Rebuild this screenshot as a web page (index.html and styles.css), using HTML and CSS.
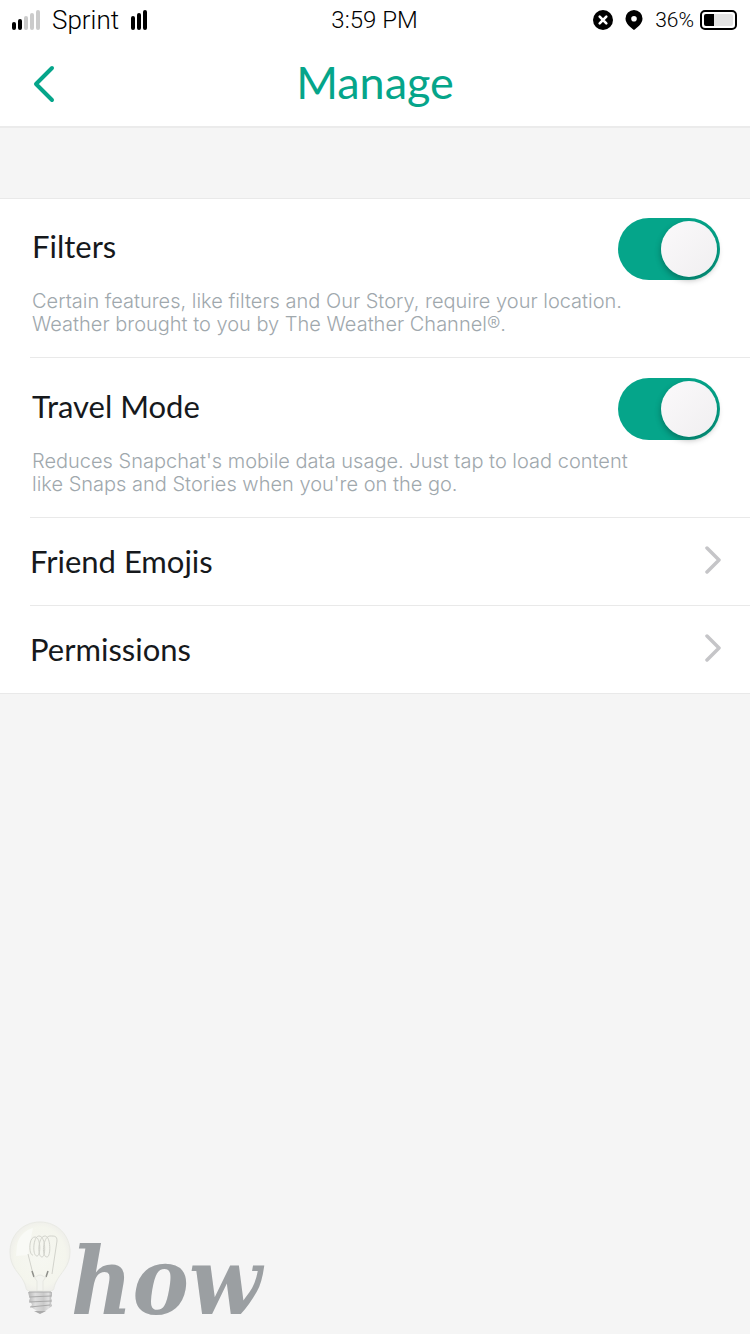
FILE: index.html
```html
<!DOCTYPE html>
<html lang="en">
<head>
<meta charset="utf-8">
<meta name="viewport" content="width=device-width, initial-scale=1">
<title>Manage</title>
<link rel="stylesheet" href="styles.css">
</head>
<body>
<div class="screen">
  <div class="status">
    <div class="status-side">
      <svg width="28" height="20" viewBox="0 0 28 20" aria-hidden="true">
        <g fill="#000"><rect x="0" y="12" width="4" height="8" rx="2"/><rect x="6" y="9" width="4" height="11" rx="2"/></g>
        <g fill="#cbcbcb"><rect x="12" y="6" width="4" height="14" rx="2"/><rect x="18" y="3" width="4" height="17" rx="2"/><rect x="24" y="0" width="4" height="20" rx="2"/></g>
      </svg>
      <span class="carrier">Sprint</span>
      <svg width="16" height="20" viewBox="0 0 16 20" aria-hidden="true">
        <rect x="0" y="6" width="4" height="14" rx="2"/><rect x="6" y="3" width="4" height="17" rx="2"/><rect x="12" y="0" width="4" height="20" rx="2"/>
      </svg>
    </div>
    <time>3:59 PM</time>
    <div class="status-side status-end">
      <svg width="20" height="20" viewBox="0 0 20 20" aria-hidden="true">
        <circle cx="10" cy="10" r="10"/><path d="M6.700 6.700l6.600 6.600M13.300 6.700l-6.600 6.600" stroke="#fff" stroke-width="2.600" stroke-linecap="round"/>
      </svg>
      <svg width="18" height="20" viewBox="0 0 18 20" aria-hidden="true">
        <path fill-rule="evenodd" d="M9 0a8.500 8.500 0 0 1 8.500 8.600c0 5.200-5 8.800-8.500 11.400C5.500 17.400.5 13.800.5 8.600A8.500 8.500 0 0 1 9 0zm0 6a2.800 2.800 0 1 0 0 5.600A2.800 2.800 0 0 0 9 6z"/>
      </svg>
      <span class="battery">
        <span>36%</span>
        <svg width="37" height="20" viewBox="0 0 37 20" aria-hidden="true">
          <rect x="1" y="1" width="35" height="18" rx="4" fill="#fff" stroke="#000" stroke-width="2"/>
          <rect x="4" y="4" width="29" height="12" rx="2" fill="#e3e3e3"/><path d="M6 4h8v12H6a2 2 0 0 1-2-2V6a2 2 0 0 1 2-2z"/>
        </svg>
      </span>
    </div>
  </div>
  <header class="bar">
    <button class="back" type="button" aria-label="Back">
      <svg width="24" height="38" viewBox="0 0 24 38" aria-hidden="true"><path d="M20 3L4 19l16 16" fill="none" stroke="currentColor" stroke-width="4" stroke-linecap="round" stroke-linejoin="round"/></svg>
    </button>
    <h1>Manage</h1>
  </header>
  <main class="list">
    <section class="item setting">
      <div class="setting-head">
        <label for="filters">Filters</label>
        <input class="switch" id="filters" type="checkbox" role="switch" checked>
      </div>
      <p>Certain features, like filters and Our Story, require your location.<br>Weather brought to you by The Weather Channel®.</p>
    </section>
    <section class="item setting">
      <div class="setting-head">
        <label for="travel">Travel Mode</label>
        <input class="switch" id="travel" type="checkbox" role="switch" checked>
      </div>
      <p>Reduces Snapchat's mobile data usage. Just tap to load content<br>like Snaps and Stories when you're on the go.</p>
    </section>
    <a class="item link" href="#emojis">Friend Emojis
      <svg width="18" height="28" viewBox="0 0 18 28" aria-hidden="true"><path d="M3 2l12 12L3 26" fill="none" stroke="#c5c5c8" stroke-width="3.500" stroke-linecap="round" stroke-linejoin="round"/></svg>
    </a>
    <a class="item link" href="#permissions">Permissions
      <svg width="18" height="28" viewBox="0 0 18 28" aria-hidden="true"><path d="M3 2l12 12L3 26" fill="none" stroke="#c5c5c8" stroke-width="3.500" stroke-linecap="round" stroke-linejoin="round"/></svg>
    </a>
  </main>
  <footer class="brand">
    <svg width="62" height="94" viewBox="0 0 62 94" aria-hidden="true">
      <defs>
        <radialGradient id="glass"><stop offset="0" stop-color="#f6f7f1"/><stop offset=".85" stop-color="#f4f5ed"/><stop offset="1" stop-color="#f0f0eb"/></radialGradient>
        <linearGradient id="metal"><stop offset="0" stop-color="#b5b5b5"/><stop offset=".3" stop-color="#dedede"/><stop offset=".65" stop-color="#cacaca"/><stop offset=".85" stop-color="#e0e0e0"/><stop offset="1" stop-color="#b5b5b5"/></linearGradient>
      </defs>
      <path d="M31 1C13 1 1 15 1 31c0 16 10 21 14 30 3 6 1 8 5 9h22c4-1 2-3 5-9 4-9 14-15 14-30C61 15 49 1 31 1z" fill="url(#glass)" stroke="#e9eae4"/>
      <path d="M8 24C10 15 16 9 24 7l-3 14-2 13-12 1z" fill="#f9faf6"/>
      <path d="M24 53l-5-20M24 34c-4 1-5-18 2-18 6 0 6 19 2 19-5 0-4-20 2-20 7 0 7 21 3 21-5 0-4-21 3-21 6 0 6 21 2 21-6 0-4-21 3-21 5 0 7 0 7 5l-5 33" fill="none" stroke="#d2d3cc"/>
      <path d="M23 50l2 6M39 50l-2 6" stroke="#8f908b" stroke-width="1.500"/>
      <path d="M25 56c2 1 3-2 6-2s4 3 6 2l-3 4v10h-6V60z" fill="#f3f4ef" stroke="#e6e7e1"/>
      <path d="M19 71h24v4l-1 2 1 3-1 2 1 3-4 3-4 3-3 1-4-2-6-4 1-3-3-3 1-3-1-2z" fill="url(#metal)"/>
      <path d="M20 71h22M20 76l22-1M20 81l22-1M21 86l20-2" stroke="#a9a9a9"/>
      <path d="M25 90h12l-6 3z" fill="#aaa"/>
    </svg>
    <span>how</span>
  </footer>
</div>
</body>
</html>
```
FILE: styles.css
```css
* { box-sizing: border-box; }

body {
  margin: 0;
  background: #f5f5f5;
  color: #16191c;
  font-family: Lato, "Open Sans", sans-serif;
}

.screen {
  display: flex;
  flex-direction: column;
  min-height: 100vh;
}

.status {
  display: grid;
  grid-template-columns: 1fr auto 1fr;
  align-items: center;
  height: 40px;
  padding: 0 13px 0 12px;
  background: #fff;
  color: #000;
  font-family: Roboto, sans-serif;
  font-size: 24px;
  font-weight: 300;
}

.status-side, .battery {
  display: flex;
  align-items: center;
  gap: 12px;
}

.carrier { font-size: 26px; }
.status-end { justify-content: flex-end; }
.battery { gap: 6px; font-size: 21px; }

.bar {
  display: grid;
  grid-template-columns: 64px 1fr 64px;
  align-items: center;
  height: 88px;
  padding-bottom: 2px;
  background: #fff;
  border-bottom: 2px solid #ebebeb;
  color: #05a58a;
}

.back {
  display: flex;
  justify-content: flex-end;
  padding: 4px 8px 0 0;
  border: 0;
  background: none;
  color: inherit;
}

h1 {
  margin: 0;
  font-size: 45px;
  font-weight: 400;
  line-height: 52px;
  text-align: center;
}

.list {
  margin-top: 70px;
  padding-left: 30px;
  background: #fff;
  border: solid #e9e9e9;
  border-width: 1px 0;
  font-size: 31px;
  line-height: 36px;
}

.item + .item { border-top: 1px solid #e9e9e9; }

.setting { padding: 19px 30px 21px 2px; }
.item + .setting { padding-top: 20px; }

.setting-head {
  display: flex;
  justify-content: space-between;
  align-items: center;
  margin-bottom: 10px;
}

.setting-head label { padding-bottom: 6px; }

.setting p {
  margin: 0;
  color: #a0a8ad;
  font-family: Inter, sans-serif;
  font-size: 20px;
  font-weight: 300;
  line-height: 23px;
}

.switch {
  appearance: none;
  width: 102px;
  height: 62px;
  margin: 0;
  padding: 3px;
  border-radius: 31px;
  background: #05a58a;
}

.switch::before {
  content: "";
  display: block;
  width: 56px;
  height: 56px;
  border-radius: 50%;
  background: linear-gradient(135deg, #fbf9fb, #f0eff0);
  box-shadow: 0 3px 6px rgba(0, 0, 0, .3);
}

.switch:checked::before { margin-left: auto; }

.link {
  display: flex;
  justify-content: space-between;
  align-items: center;
  height: 88px;
  padding: 0 28px 2px 0;
  color: inherit;
  text-decoration: none;
}

.link svg { margin-bottom: 2px; }

.brand {
  display: flex;
  align-items: flex-end;
  margin-top: auto;
  padding: 0 9px 19px;
  color: #9b9fa2;
}

.brand span {
  font: italic bold 94px/68px "DejaVu Serif Condensed", "DejaVu Serif", serif;
}
```
